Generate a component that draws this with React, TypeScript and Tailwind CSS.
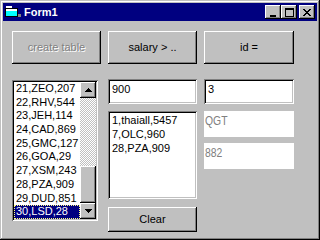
import React from 'react';

const raised =
  'shadow-[inset_-1px_-1px_#000,inset_1px_1px_#fff,inset_-2px_-2px_#808080,inset_2px_2px_#c0c0c0]';
const sunken =
  'shadow-[inset_1px_1px_#808080,inset_-1px_-1px_#fff,inset_2px_2px_#000,inset_-2px_-2px_#c0c0c0]';

const list1 = [
  '21,ZEO,207',
  '22,RHV,544',
  '23,JEH,114',
  '24,CAD,869',
  '25,GMC,127',
  '26,GOA,29',
  '27,XSM,243',
  '28,PZA,909',
  '29,DUD,851',
  '30,LSD,28',
];

const list2 = ['1,thaiall,5457', '7,OLC,960', '28,PZA,909'];

function Arrow({ up }: { up?: boolean }) {
  return (
    <div className={`w-[16px] h-[16px] bg-[#c0c0c0] flex items-center justify-center ${raised}`}>
      <svg width="7" height="4" viewBox="0 0 7 4">
        {up ? <path d="M3 0h1v1h1v1h1v1h1v1H0V3h1V2h1V1h1z" fill="#000" /> : <path d="M0 0h7v1H6v1H5v1H4v1H3V3H2V2H1V1H0z" fill="#000" />}
      </svg>
    </div>
  );
}

function TitleButton({ kind }: { kind: 'min' | 'max' | 'close' }) {
  return (
    <div className={`w-[16px] h-[14px] bg-[#c0c0c0] flex items-center justify-center ${raised}`}>
      <svg width="9" height="9" viewBox="0 0 9 9" shapeRendering="crispEdges">
        {kind === 'min' && <rect x="1" y="7" width="6" height="2" fill="#000" />}
        {kind === 'max' && (
          <>
            <rect x="0" y="0" width="9" height="2" fill="#000" />
            <rect x="0" y="0" width="1" height="9" fill="#000" />
            <rect x="8" y="0" width="1" height="9" fill="#000" />
            <rect x="0" y="8" width="9" height="1" fill="#000" />
          </>
        )}
        {kind === 'close' && (
          <path d="M0 1h2v1h1v1h2V2h1V1h2v1H7v1H6v1H5v1h1v1h1v1h1v1H6V7H5V6H3v1H2v1H0V7h1V6h1V5h1V4H2V3H1V2H0z" fill="#000" />
        )}
      </svg>
    </div>
  );
}

export default function App() {
  return (
    <div className="w-[320px] h-[240px] bg-[#c0c0c0] p-[3px] flex flex-col overflow-hidden font-['Liberation_Sans',Arial,sans-serif] text-[11px] leading-[13px] text-black shadow-[inset_-1px_-1px_#000,inset_1px_1px_#c0c0c0,inset_-2px_-2px_#808080,inset_2px_2px_#fff]">
      {/* title bar */}
      <div className="h-[18px] bg-[#000080] flex items-center pl-[2px] pr-[2px]">
        <svg width="16" height="14" viewBox="0 0 16 14" shapeRendering="crispEdges">
          <rect x="1" y="1" width="6" height="2" fill="#fff" />
          <rect x="0" y="3" width="13" height="9" fill="#000" />
          <rect x="1" y="4" width="11" height="7" fill="#00ffff" />
          <rect x="1" y="4" width="11" height="2" fill="#fff" />
          <rect x="13" y="9" width="3" height="3" fill="#808080" />
        </svg>
        <span className="ml-[3px] text-white font-bold text-[11px]">Form1</span>
        <div className="ml-auto flex">
          <TitleButton kind="min" />
          <TitleButton kind="max" />
          <div className="w-[2px]" />
          <TitleButton kind="close" />
        </div>
      </div>

      <div className="flex gap-[7px] pl-[9px] pt-[10px]">
        {/* column 1 */}
        <div className="w-[89px] flex flex-col">
          <div className={`h-[33px] flex items-center justify-center text-[#808080] [text-shadow:1px_1px_0_#fff] ${raised}`}>
            create table
          </div>
          <div className={`mt-[16px] w-[86px] h-[141px] bg-white p-[2px] flex ${sunken}`}>
            <div className="flex-1 flex flex-col overflow-hidden">
              {list1.map((t, i) => (
                <div
                  key={t}
                  className={
                    i === list1.length - 1
                      ? 'h-[13.7px] pl-[2px] bg-[#000080] text-white outline-1 outline-dotted outline-[#ffff80] -outline-offset-1'
                      : 'h-[13.7px] pl-[2px]'
                  }
                >
                  {t}
                </div>
              ))}
            </div>
            <div className="w-[16px] flex flex-col">
              <Arrow up />
              <div className="flex-1 bg-[repeating-conic-gradient(#c0c0c0_0_25%,#fff_0_50%)] bg-[length:2px_2px]" />
              <div className={`h-[37px] bg-[#c0c0c0] ${raised}`} />
              <Arrow />
            </div>
          </div>
        </div>

        {/* column 2 */}
        <div className="w-[89px] flex flex-col">
          <div className={`h-[33px] flex items-center justify-center ${raised}`}>salary &gt; ..</div>
          <div className={`mt-[15px] h-[25px] bg-white pl-[4px] pt-[4px] ${sunken}`}>900</div>
          <div className={`mt-[7px] h-[88px] bg-white p-[2px] pl-[4px] pt-[3px] ${sunken}`}>
            {list2.map((t) => (
              <div key={t} className="h-[14px]">
                {t}
              </div>
            ))}
          </div>
          <div className={`mt-[8px] h-[25px] flex items-center justify-center ${raised}`}>Clear</div>
        </div>

        {/* column 3 */}
        <div className="w-[90px] flex flex-col">
          <div className={`h-[33px] flex items-center justify-center ${raised}`}>id =</div>
          <div className={`mt-[15px] h-[25px] bg-white pl-[4px] pt-[4px] ${sunken}`}>3</div>
          <div className="mt-[7px] h-[26px] bg-white pl-[1px] pt-[2px] text-[#808080] text-[13px] leading-[15px]">
            <span className="inline-block scale-x-[0.8] origin-left">QGT</span>
          </div>
          <div className="mt-[6px] h-[26px] bg-white pl-[1px] pt-[2px] text-[#808080] text-[13px] leading-[15px]">
            <span className="inline-block scale-x-[0.8] origin-left">882</span>
          </div>
        </div>
      </div>
    </div>
  );
}
